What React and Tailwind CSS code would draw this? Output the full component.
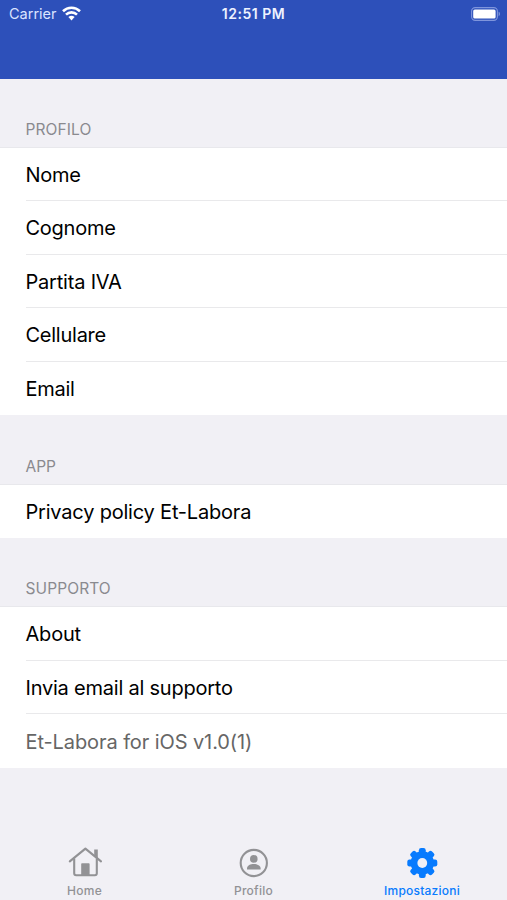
import React, { useState } from "react";

const sections = [
    {
        title: "PROFILO",
        titleClass: "tracking-[0.1px]",
        headerClass: "h-[68.5px]",
        rows: [
            { label: "Nome", className: "text-black tracking-[-0.3px]" },
            { label: "Cognome", className: "text-black tracking-[-0.25px]" },
            { label: "Partita IVA", className: "text-black tracking-[-0.2px]" },
            { label: "Cellulare", className: "text-black tracking-[-0.25px]" },
            { label: "Email", className: "text-black tracking-[-0.25px]" },
        ],
    },
    {
        title: "APP",
        titleClass: "tracking-[0px]",
        headerClass: "h-[69.5px]",
        rows: [{ label: "Privacy policy Et-Labora", className: "text-black tracking-[-0.2px]" }],
    },
    {
        title: "SUPPORTO",
        titleClass: "tracking-[0.1px]",
        headerClass: "h-[69px]",
        rows: [
            { label: "About", className: "text-black tracking-[-0.2px]" },
            { label: "Invia email al supporto", className: "text-black tracking-[-0.22px]" },
            { label: "Et-Labora for iOS v1.0(1)", className: "text-[#666666] tracking-[-0.09px]" },
        ],
    },
];

const WifiIcon = () => (
    <svg className="ml-[5px] h-[15px] w-[19px]" viewBox="0 0 19 15" fill="none" stroke="white" strokeWidth="2.6">
        <path d="M1 5.2a12.2 12.2 0 0 1 17 0" />
        <path d="M4 8.6a7.9 7.9 0 0 1 11 0" />
        <path d="M9.5 14.4 6.4 11.1a4.5 4.5 0 0 1 6.2 0z" fill="white" stroke="none" />
    </svg>
);

const BatteryIcon = () => (
    <svg className="h-[14px] w-[30px]" viewBox="0 0 30 14">
        <rect x="0.6" y="0.6" width="25.8" height="12.8" rx="3.6" fill="none" stroke="#7f95dc" strokeWidth="1.1" />
        <rect x="2.2" y="2.4" width="22.4" height="9.2" rx="1.6" fill="white" />
        <path d="M27.6 4.8c1.8.6 1.8 3.8 0 4.4z" fill="#7f95dc" />
    </svg>
);

const HomeIcon = () => (
    <svg className="h-8 w-9" viewBox="0 0 36 32" fill="none" stroke="currentColor" strokeWidth="2.1">
        <path d="M2.8 14.4 18.4 1.6 34 14.4" strokeLinecap="round" strokeLinejoin="round" />
        <path d="M7.2 11.5v14.7a2 2 0 0 0 2 2h18.6a2 2 0 0 0 2-2V11.5" />
        <path d="M27.2 2.6h3.6v9.2l-3.6-3z" fill="currentColor" stroke="none" />
        <path d="M14.2 28V17a.8.8 0 0 1 .8-.8h6.8a.8.8 0 0 1 .8.8v11z" fill="currentColor" stroke="none" />
    </svg>
);

const ProfileIcon = () => (
    <svg className="h-8 w-9" viewBox="0 0 36 32" fill="currentColor">
        <circle cx="17.8" cy="16" r="13.1" fill="none" stroke="currentColor" strokeWidth="2.1" />
        <circle cx="17.8" cy="11.9" r="3.8" />
        <path d="M11 22.6v-1.4c0-2.8 3.6-4.3 6.8-4.3s6.8 1.5 6.8 4.3v1.4z" />
    </svg>
);

const SettingsIcon = () => (
    <svg className="h-8 w-9" viewBox="0 0 36 32" fill="currentColor">
        <g transform="translate(-0.7 0)">
            {[0, 45, 90, 135].map((angle) => (
                <rect key={angle} x="14.6" y="1" width="6.8" height="30" rx="2.2" transform={`rotate(${angle} 18 16)`} />
            ))}
            <circle cx="18" cy="16" r="11.7" />
            <circle cx="18" cy="16" r="4.9" fill="#f1f0f5" />
        </g>
    </svg>
);

const tabs = [
    { name: "Home", Icon: HomeIcon, labelClass: "tracking-[0.25px]" },
    { name: "Profilo", Icon: ProfileIcon, labelClass: "tracking-[0.25px]" },
    { name: "Impostazioni", Icon: SettingsIcon, labelClass: "tracking-[0.22px] pr-[1px]" },
];

const App = () => {
    const [activeTab, setActiveTab] = useState("Impostazioni");

    return (
        <div className="flex h-[900px] w-[507px] flex-col overflow-hidden bg-[#f1f0f5] font-['Inter',sans-serif]">
            <header className="h-[79px] shrink-0 bg-[#2d50ba]">
                <div className="grid h-[27px] grid-cols-[1fr_auto_1fr] items-center pr-[6px] pl-[9px] text-white">
                    <div className="flex items-center">
                        <span className="pt-px text-[14.5px] leading-none text-[#dbe4ff]">Carrier</span>
                        <WifiIcon />
                    </div>
                    <span className="pr-[3px] text-center text-[14px] leading-none font-semibold tracking-[0.5px] text-[#eef2ff]">
                        12:51 PM
                    </span>
                    <div className="flex justify-end">
                        <BatteryIcon />
                    </div>
                </div>
            </header>

            <main className="flex-1">
                {sections.map((section) => (
                    <section key={section.title}>
                        <div className={`flex items-end pb-2 pl-[25.5px] ${section.headerClass}`}>
                            <h2 className={`text-[15.5px] leading-5 text-[#8a8a8f] ${section.titleClass}`}>{section.title}</h2>
                        </div>
                        <ul className="bg-white shadow-[0_-1px_0_#e8e8ec]">
                            {section.rows.map((row, index) => (
                                <li key={row.label} className="h-[53.5px] pl-[25.5px]">
                                    <div
                                        className={`flex h-full items-center pt-[2px] text-[20px] ${
                                            index < section.rows.length - 1 ? "border-b border-[#e9e9eb]" : ""
                                        }`}
                                    >
                                        <span className={row.className}>{row.label}</span>
                                    </div>
                                </li>
                            ))}
                        </ul>
                    </section>
                ))}
            </main>

            <nav className="grid h-[53px] shrink-0 grid-cols-3">
                {tabs.map(({ name, Icon, labelClass }) => (
                    <button
                        key={name}
                        onClick={() => setActiveTab(name)}
                        className={`flex flex-col items-center ${activeTab === name ? "text-[#087bfe]" : "text-[#929295]"}`}
                    >
                        <Icon />
                        <span className={`mt-1 text-[12px] leading-4 font-medium ${labelClass}`}>{name}</span>
                    </button>
                ))}
            </nav>
        </div>
    );
};

export default App;
